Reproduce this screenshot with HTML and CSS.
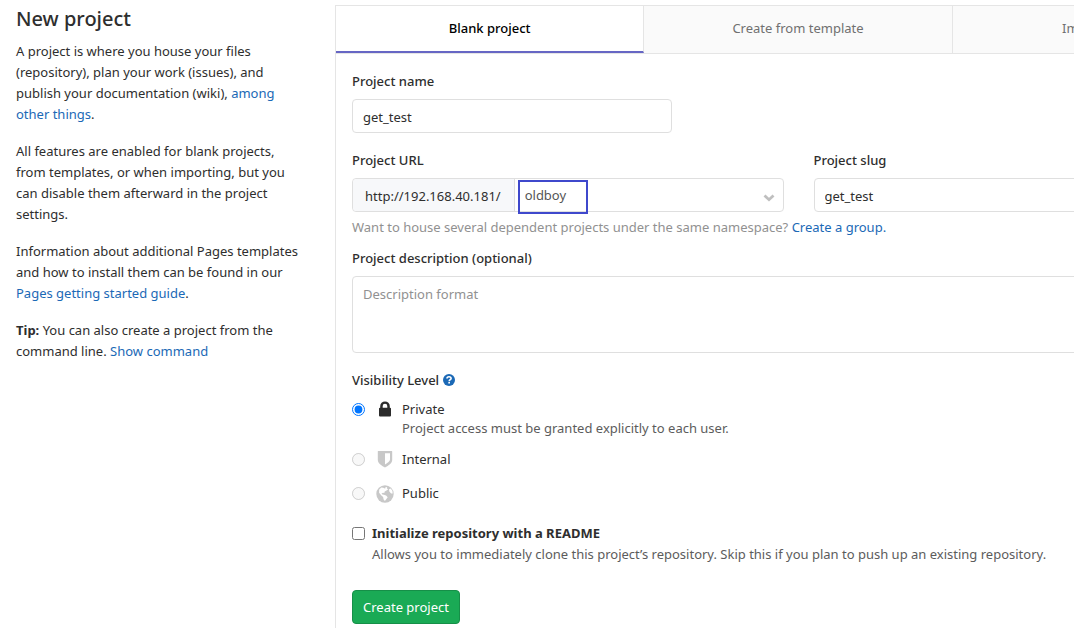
FILE: index.html
```html
<!DOCTYPE html>
<html lang="en">
<head>
<meta charset="utf-8">
<title>New project</title>
<link rel="stylesheet" href="styles.css">
</head>
<body>
<div class="page">
  <aside class="sidebar">
    <h1 class="title">New project</h1>
    <p>A project is where you house your files (repository), plan your work (issues), and publish your documentation (wiki), <a href="#features">among other things</a>.</p>
    <p>All features are enabled for blank projects, from templates, or when importing, but you can disable them afterward in the project settings.</p>
    <p>Information about additional Pages templates and how to install them can be found in our <a href="#pages">Pages getting started guide</a>.</p>
    <p><strong>Tip:</strong> You can also create a project from the command line. <a href="#command">Show command</a></p>
  </aside>
  <main class="panel">
    <nav class="tabs">
      <a class="tab tab-active" href="#blank">Blank project</a>
      <a class="tab" href="#template">Create from template</a>
      <a class="tab" href="#import">Import project</a>
    </nav>
    <form class="form">
      <div class="field field-name">
        <label class="label" for="name">Project name</label>
        <input class="control" id="name" type="text" value="get_test">
      </div>
      <div class="columns">
        <div class="field">
          <label class="label" for="namespace">Project URL</label>
          <div class="group">
            <span class="prefix">http://192.168.40.181/</span>
            <div class="select-wrap">
              <select class="select" id="namespace"><option>oldboy</option></select>
              <span class="marker"></span>
              <svg class="chevron" viewBox="0 0 12 8" aria-hidden="true"><path d="M1.5 1.5 6 5.700l4.500-4.200" fill="none" stroke="#bfbfbf" stroke-width="2.800"/></svg>
            </div>
          </div>
        </div>
        <div class="field">
          <label class="label" for="slug">Project slug</label>
          <input class="control" id="slug" type="text" value="get_test">
        </div>
      </div>
      <p class="hint">Want to house several dependent projects under the same namespace? <a href="#group">Create a group.</a></p>
      <div class="field field-description">
        <label class="label" for="description">Project description (optional)</label>
        <textarea class="control area" id="description" placeholder="Description format"></textarea>
      </div>
      <fieldset class="levels">
        <legend class="label legend">Visibility Level
          <a class="help" href="#help" aria-label="Help"><svg viewBox="0 0 12 12"><circle cx="6" cy="6" r="6" fill="#1b69b6"/><path d="M4 4.600C4 3.200 5 2.700 6 2.700s2.100.5 2.100 1.700C8.100 5.600 6.200 5.700 6.200 7.200" fill="none" stroke="#fff" stroke-width="1.600"/><path d="M5.300 8h1.700v1.600H5.300z" fill="#fff"/></svg></a>
        </legend>
        <div class="level">
          <input class="check" type="radio" name="level" id="private" checked>
          <svg class="icon" viewBox="0 0 16 16" aria-hidden="true"><path d="M2 7.600C2 7 2.400 6.700 3 6.700h.2V5.200a4.800 4.800 0 0 1 9.600 0v1.500h.2c.6 0 1 .3 1 .9v7c0 .6-.4.9-1 .9H3c-.6 0-1-.3-1-.9zm3.700-.9h4.600V5.100a2.300 2.300 0 0 0-4.600 0z" fill="#2b2b2b"/></svg>
          <div class="level-text">
            <label for="private">Private</label>
            <span class="note">Project access must be granted explicitly to each user.</span>
          </div>
        </div>
        <div class="level">
          <input class="check" type="radio" name="level" id="internal" disabled>
          <svg class="icon" viewBox="0 0 16 16" aria-hidden="true"><path fill-rule="evenodd" d="M.8.5C.8 0 1 0 1.300 0h13.400c.3 0 .5.200.5.500V9c0 3-3.500 5.500-7.200 7.500C4.300 14.500.8 12 .8 9zM8 2.200v11.400c2.700-1.600 5-3.100 5-5V2.200z" fill="#c8c8c8"/></svg>
          <div class="level-text"><label for="internal">Internal</label></div>
        </div>
        <div class="level">
          <input class="check" type="radio" name="level" id="public" disabled>
          <svg class="icon icon-wide" viewBox="0 0 18 18" aria-hidden="true"><circle cx="9" cy="9" r="8.700" fill="#c8c8c8"/><path d="M3.200 4.400 5.300 2.500l2 .2 1.500.9.900-.7-.4-1 1.900.4-.3 1.300 1.300.7-1.700 1.300-1.800.8-.4 1.500-1.300-.2-1.500.8.900 1 1.400.2 2.300.9 1.600 1.600-1.300 1.900-1.500 2-1.300-1.700-.5-2.500-1.700-1.500-2.300-2.700zM13 4.300l1.700-.8 1.700 2.300.3 2.600-1.600.1-1.800-2z" fill="#fff"/></svg>
          <div class="level-text"><label for="public">Public</label></div>
        </div>
      </fieldset>
      <div class="readme">
        <input class="check" type="checkbox" id="readme">
        <div class="readme-text">
          <label class="readme-label" for="readme">Initialize repository with a README</label>
          <span class="note">Allows you to immediately clone this project’s repository. Skip this if you plan to push up an existing repository.</span>
        </div>
      </div>
      <button class="submit" type="submit">Create project</button>
    </form>
  </main>
</div>
</body>
</html>
```
FILE: styles.css
```css
* { box-sizing: border-box; }

body {
  margin: 0;
  background: #fff;
  color: #2e2e2e;
  font: 13px/21px "Noto Sans", "Open Sans", sans-serif;
}

a { color: #1b69b6; text-decoration: none; }
input, select, textarea, button { font: inherit; color: inherit; }

.page {
  display: grid;
  grid-template-columns: 289px minmax(926px, 1fr);
  gap: 30px;
  padding: 5px 16px 0;
  overflow: hidden;
}

.sidebar p { margin: 0 0 16px; }
.title { margin: 0 0 8px; font-size: 20px; line-height: 28px; font-weight: 500; }

.panel { border-left: 1px solid #e5e5e5; }
.tabs {
  display: grid;
  grid-template-columns: repeat(3, 1fr);
  border: solid #e5e5e5;
  border-width: 1px 0;
}
.tab {
  height: 47px;
  padding-top: 12px;
  border-right: 1px solid #e5e5e5;
  background: #fafafa;
  color: #707070;
  text-align: center;
}
.tab-active {
  background: #fff;
  border-bottom: 2px solid #6666c4;
  color: #000;
  font-weight: 500;
}

.form { padding: 17px 16px 4px; }
.label { display: block; margin-bottom: 7px; font-weight: 500; }
.control {
  display: block;
  width: 100%;
  height: 34px;
  padding: 7px 10px 5px;
  border: 1px solid #dfdfdf;
  border-radius: 4px;
  background: #fff;
}
.field-name { margin-bottom: 17px; }
.field-name .control { width: 320px; }
.columns { display: grid; grid-template-columns: 1fr 1fr; gap: 30px; }

.group { display: flex; height: 34px; border: 1px solid #dfdfdf; border-radius: 4px; }
.prefix { padding: 7px 13px 5px 12px; border-right: 1px solid #dfdfdf; border-radius: 4px 0 0 4px; background: #f7f8fa; }
.select-wrap { position: relative; flex: 1; }
.select {
  width: 100%;
  height: 32px;
  padding: 0 10px;
  border: 0;
  background: none;
  appearance: none;
  color: #555;
}
.marker {
  position: absolute;
  top: 1px;
  left: 3px;
  width: 70px;
  height: 34px;
  border: 2px solid #3f48cc;
  pointer-events: none;
}
.chevron { position: absolute; top: 15px; right: 8px; width: 12px; height: 8px; }

.hint { margin: 5px 0 10px; color: #919191; }
.field-description { margin-bottom: 17px; }
.area { height: 77px; resize: none; }
.area::placeholder { color: #919191; }

.levels { margin: 0 0 6px; padding: 0; border: 0; }
.legend { margin-bottom: 8px; padding: 0; }
.help svg { display: inline-block; width: 12px; height: 12px; vertical-align: -1px; }
.level { display: flex; align-items: flex-start; margin-bottom: 13px; }
.check { flex: none; width: 13px; height: 13px; margin: 4px 0 0; }
.icon { flex: none; width: 16px; height: 18px; margin: 1px 9px 0 12px; }
.icon-wide { width: 18px; margin: 2px 8px 0 11px; }
.level-text label { display: block; line-height: 21px; }
.note { display: block; color: #5c5c5c; }
.level-text .note { line-height: 16px; }

.readme { display: flex; gap: 7px; margin-bottom: 25px; }
.readme-label { display: block; font-weight: 700; }

.submit {
  height: 34px;
  padding: 0 10px;
  border: 1px solid #168f48;
  border-radius: 4px;
  background: #1aaa55;
  color: #fff;
}
```
